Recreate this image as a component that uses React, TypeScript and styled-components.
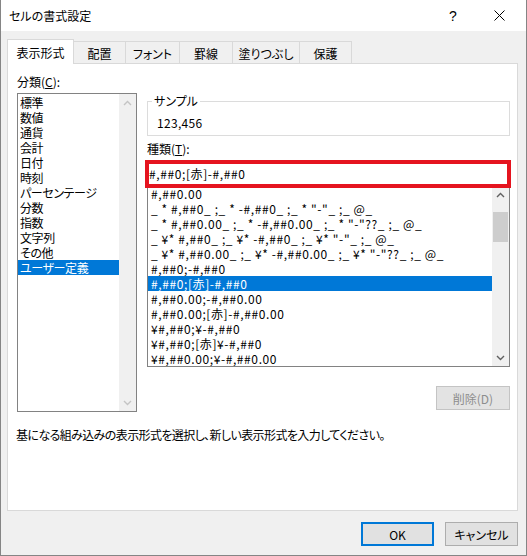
import styled, { createGlobalStyle } from 'styled-components';

const GlobalStyle = createGlobalStyle`
  html, body {
    margin: 0;
    padding: 0;
    background: #ffffff;
  }
  body {
    font-family: "Noto Sans CJK JP", "Noto Sans", sans-serif;
    font-size: 12px;
    font-feature-settings: "palt";
    color: #000000;
  }
  * {
    box-sizing: border-box;
  }
`;

const tabs = [
  { label: '表示形式', width: 67 },
  { label: '配置', width: 52 },
  { label: 'フォント', width: 54 },
  { label: '罫線', width: 53 },
  { label: '塗りつぶし', width: 67 },
  { label: '保護', width: 52 },
];

const categories = [
  '標準',
  '数値',
  '通貨',
  '会計',
  '日付',
  '時刻',
  'パーセンテージ',
  '分数',
  '指数',
  '文字列',
  'その他',
  'ユーザー定義',
];

const formats = [
  '#,##0.00',
  '_ * #,##0_ ;_ * -#,##0_ ;_ * "-"_ ;_ @_',
  '_ * #,##0.00_ ;_ * -#,##0.00_ ;_ * "-"??_ ;_ @_',
  '_ ¥* #,##0_ ;_ ¥* -#,##0_ ;_ ¥* "-"_ ;_ @_',
  '_ ¥* #,##0.00_ ;_ ¥* -#,##0.00_ ;_ ¥* "-"??_ ;_ @_',
  '#,##0;-#,##0',
  '#,##0;[赤]-#,##0',
  '#,##0.00;-#,##0.00',
  '#,##0.00;[赤]-#,##0.00',
  '¥#,##0;¥-#,##0',
  '¥#,##0;[赤]¥-#,##0',
  '¥#,##0.00;¥-#,##0.00',
];

const Chevron = ({ up, color }: { up: boolean; color: string }) => (
  <svg width="9" height="6" viewBox="0 0 9 6">
    <path
      d={up ? 'M1 5 L4.5 1.5 L8 5' : 'M1 1 L4.5 4.5 L8 1'}
      fill="none"
      stroke={color}
      strokeWidth="1.4"
    />
  </svg>
);

interface ScrollProps {
  enabled: boolean;
  thumbTop?: number;
  thumbHeight?: number;
}

const VScroll = ({ enabled, thumbTop = 0, thumbHeight = 0 }: ScrollProps) => {
  const color = enabled ? '#606060' : '#c4c4c4';
  return (
    <St.ScrollBar>
      <St.ArrowBox>
        <Chevron up color={color} />
      </St.ArrowBox>
      <St.Track>{enabled && <St.Thumb style={{ marginTop: thumbTop, height: thumbHeight }} />}</St.Track>
      <St.ArrowBox>
        <Chevron up={false} color={color} />
      </St.ArrowBox>
    </St.ScrollBar>
  );
};

const App = () => {
  return (
    <>
      <GlobalStyle />
      <St.Window>
        <St.TitleBar>
          <St.Title>セルの書式設定</St.Title>
          <St.CaptionButton>
            <St.Help>?</St.Help>
          </St.CaptionButton>
          <St.CaptionButton>
            <svg width="11" height="11" viewBox="0 0 11 11">
              <path d="M0.5 0.5 L10.5 10.5 M10.5 0.5 L0.5 10.5" stroke="#000" strokeWidth="1" />
            </svg>
          </St.CaptionButton>
        </St.TitleBar>

        <St.Body>
          <St.TabStrip>
            {tabs.map((t, i) => (
              <St.Tab key={t.label} $active={i === 0} $width={t.width}>
                {t.label}
              </St.Tab>
            ))}
          </St.TabStrip>

          <St.Panel>
            <St.Columns>
              <St.Column>
                <St.Label>
                  分類(<u>C</u>):
                </St.Label>
                <St.CategoryList>
                  <St.Items $padTop={1}>
                    {categories.map((c, i) => (
                      <St.CategoryItem key={c} $selected={i === categories.length - 1}>
                        {c}
                      </St.CategoryItem>
                    ))}
                  </St.Items>
                  <VScroll enabled={false} />
                </St.CategoryList>
              </St.Column>

              <St.Column>
                <St.SampleGroup>
                  <St.Legend>サンプル</St.Legend>
                  <St.SampleValue>123,456</St.SampleValue>
                </St.SampleGroup>
                <St.TypeLabel>
                  種類(<u>T</u>):
                </St.TypeLabel>
                <St.FormatInput>#,##0;[赤]-#,##0</St.FormatInput>
                <St.FormatList>
                  <St.Items $padTop={0}>
                    {formats.map((f, i) => (
                      <St.FormatItem key={f} $selected={i === 6}>
                        {f}
                      </St.FormatItem>
                    ))}
                  </St.Items>
                  <VScroll enabled thumbTop={9} thumbHeight={30} />
                </St.FormatList>
                <St.DeleteRow>
                  <St.Button $disabled $width={74}>
                    削除(D)
                  </St.Button>
                </St.DeleteRow>
              </St.Column>
            </St.Columns>

            <St.Description>基になる組み込みの表示形式を選択し、新しい表示形式を入力してください。</St.Description>
          </St.Panel>

          <St.Footer>
            <St.Button $default $width={73}>
              OK
            </St.Button>
            <St.Button $width={73}>キャンセル</St.Button>
          </St.Footer>
        </St.Body>
      </St.Window>
    </>
  );
};

export default App;

const St = {
  Window: styled.div`
    width: 527px;
    height: 556px;
    display: flex;
    flex-direction: column;
    background: #f0f0f0;
    border: 1px solid #858585;
    border-top: none;
  `,
  TitleBar: styled.div`
    height: 31px;
    flex: none;
    display: flex;
    align-items: center;
    padding: 0 4px 0 8px;
    background: #ffffff;
  `,
  Title: styled.div`
    flex: 1;
    line-height: 16px;
  `,
  CaptionButton: styled.div`
    width: 46px;
    height: 31px;
    display: flex;
    align-items: center;
    justify-content: center;
  `,
  Help: styled.span`
    font-family: "Liberation Sans", sans-serif;
    font-size: 14px;
  `,
  Body: styled.div`
    flex: 1;
    display: flex;
    flex-direction: column;
    padding: 8px 8px 0 6px;
  `,
  TabStrip: styled.div`
    display: flex;
    align-items: flex-end;
    height: 25px;
    margin-bottom: -1px;
    position: relative;
    z-index: 1;
  `,
  Tab: styled.div<{ $active?: boolean; $width: number }>`
    width: ${({ $width }) => $width}px;
    height: ${({ $active }) => ($active ? 25 : 22)}px;
    margin-bottom: ${({ $active }) => ($active ? 0 : 1)}px;
    display: flex;
    align-items: center;
    justify-content: center;
    padding-top: ${({ $active }) => ($active ? 0 : 2)}px;
    background: ${({ $active }) => ($active ? '#ffffff' : '#f0f0f0')};
    border: 1px solid #d9d9d9;
    border-bottom: none;
    border-left: ${({ $active }) => ($active ? '1px solid #d9d9d9' : 'none')};
    white-space: nowrap;
  `,
  Panel: styled.div`
    height: 448px;
    flex: none;
    display: flex;
    flex-direction: column;
    background: #ffffff;
    border: 1px solid #d9d9d9;
    padding: 10px 7px 0 9px;
  `,
  Columns: styled.div`
    display: grid;
    grid-template-columns: 120px 1fr;
    column-gap: 10px;
  `,
  Column: styled.div`
    display: flex;
    flex-direction: column;
    min-width: 0;
  `,
  Label: styled.div`
    line-height: 15px;
    height: 15px;
    margin-bottom: 4px;
    white-space: nowrap;
  `,
  CategoryList: styled.div`
    height: 319px;
    display: flex;
    border: 1px solid #828282;
    background: #ffffff;
  `,
  Items: styled.div<{ $padTop: number }>`
    flex: 1;
    min-width: 0;
    overflow: hidden;
    padding-top: ${({ $padTop }) => $padTop}px;
  `,
  CategoryItem: styled.div<{ $selected?: boolean }>`
    height: 15px;
    line-height: 15px;
    padding-left: 2px;
    white-space: nowrap;
    letter-spacing: -0.4px;
    background: ${({ $selected }) => ($selected ? '#0078d7' : 'transparent')};
    color: ${({ $selected }) => ($selected ? '#ffffff' : '#000000')};
  `,
  ScrollBar: styled.div`
    width: 17px;
    flex: none;
    display: flex;
    flex-direction: column;
    background: #f0f0f0;
  `,
  ArrowBox: styled.div`
    height: 17px;
    flex: none;
    display: flex;
    align-items: center;
    justify-content: center;
  `,
  Track: styled.div`
    flex: 1;
    padding: 0 1px;
  `,
  Thumb: styled.div`
    background: #cdcdcd;
  `,
  SampleGroup: styled.fieldset`
    margin: 19px 0 0;
    padding: 0;
    min-width: 0;
    border: 1px solid #dcdcdc;
  `,
  Legend: styled.legend`
    margin-left: 4px;
    padding: 0 2px;
    line-height: 16px;
  `,
  SampleValue: styled.div`
    padding: 6px 9px 5px;
    line-height: 15px;
    letter-spacing: 0.3px;
  `,
  TypeLabel: styled.div`
    margin-top: 5px;
    line-height: 15px;
    height: 15px;
  `,
  FormatInput: styled.div`
    position: relative;
    z-index: 1;
    margin: 4px -1px 0 -2px;
    height: 28px;
    border: 4px solid #e5141f;
    background: #ffffff;
    line-height: 20px;
    padding-left: 0;
    letter-spacing: 0.6px;
    white-space: nowrap;
  `,
  FormatList: styled.div`
    margin-top: -3px;
    height: 182px;
    display: flex;
    border: 1px solid #828282;
    background: #ffffff;
  `,
  FormatItem: styled.div<{ $selected?: boolean }>`
    height: 15px;
    line-height: 15px;
    padding-left: 3px;
    white-space: pre;
    letter-spacing: 0.6px;
    background: ${({ $selected }) => ($selected ? '#0078d7' : 'transparent')};
    color: ${({ $selected }) => ($selected ? '#ffffff' : '#000000')};
  `,
  DeleteRow: styled.div`
    display: flex;
    justify-content: flex-end;
    margin-top: 19px;
  `,
  Button: styled.div<{ $default?: boolean; $disabled?: boolean; $width: number }>`
    width: ${({ $width }) => $width}px;
    height: 24px;
    display: flex;
    align-items: center;
    justify-content: center;
    background: ${({ $disabled }) => ($disabled ? '#e3e3e3' : '#e1e1e1')};
    border: ${({ $default, $disabled }) =>
      $default ? '2px solid #0078d7' : $disabled ? '1px solid #c4c4c4' : '1px solid #adadad'};
    color: ${({ $disabled }) => ($disabled ? '#8d8d8d' : '#000000')};
    white-space: nowrap;
  `,
  Description: styled.div`
    margin: 15px 0 0 -1px;
    line-height: 15px;
    letter-spacing: -0.6px;
    white-space: nowrap;
  `,
  Footer: styled.div`
    display: flex;
    justify-content: flex-end;
    gap: 11px;
    padding-top: 11px;
  `,
};
